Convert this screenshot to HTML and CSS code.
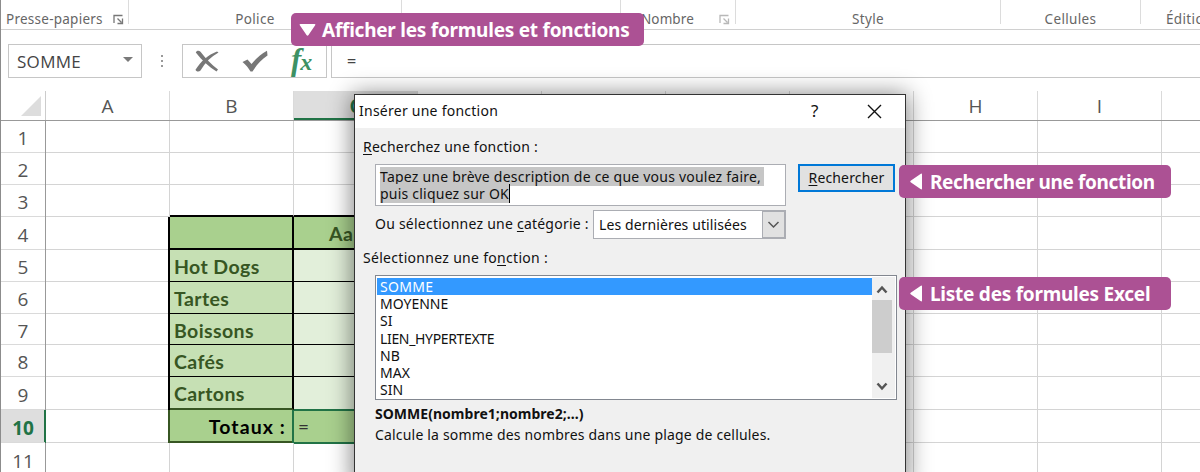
FILE: index.html
```html
<!DOCTYPE html>
<html lang="fr">
<head>
<meta charset="utf-8">
<title>Insérer une fonction</title>
<link rel="stylesheet" href="styles.css">
</head>
<body>
<div class="app">
  <div class="ribbon">
    <div class="group clipboard"><span>Presse-papiers</span>
      <svg class="launcher" width="11" height="11" viewBox="0 0 11 11"><path d="M1 9V1.500H9.500M4.500 4.500L8.500 8.500M9.500 4.500V9.500H4.500" /></svg>
    </div>
    <div class="group font"><span>Police</span></div>
    <div class="group align"></div>
    <div class="group number"><span>Nombre</span>
      <svg class="launcher pale" width="11" height="11" viewBox="0 0 11 11"><path d="M1 9V1.500H9.500M4.500 4.500L8.500 8.500M9.500 4.500V9.500H4.500" /></svg>
    </div>
    <div class="group style"><span>Style</span></div>
    <div class="group cells"><span>Cellules</span></div>
    <div class="group edit"><span>Édition</span></div>
  </div>

  <div class="formula-bar">
    <div class="name-box"><span>SOMME</span><i class="caret"></i></div>
    <div class="grip"><i></i><i></i><i></i></div>
    <div class="fx-box">
      <svg width="24" height="22" viewBox="0 0 24 22"><path d="M.8 2.500C1.500 .5 4 .2 5.500 1.800C11 8.500 16 14.500 23 19.500L21.500 21.500C14 17 7 10.500 .8 2.500ZM22 1.500L23.500 2.500C16 6.500 10 12.500 5.500 20.500C4 22.300 1 21.700 .5 19.800C6 11 13 5 22 1.500Z"/></svg>
      <svg width="26" height="22" viewBox="0 0 26 22"><path d="M.5 12L5.500 9.500L9.500 14C14 8.500 18.500 4.500 25 .8L25.500 5.500C19 10 14.500 15 10.500 21.500H8.500C6.500 18 4 15 .5 12Z"/></svg>
      <span class="fx"><b>f</b><b class="x">x</b></span>
    </div>
    <div class="formula-input">=</div>
  </div>

  <div class="col-heads">
    <div class="corner"><svg width="20" height="20" viewBox="0 0 20 20"><path d="M20 0V20H0Z"/></svg></div>
    <div>A</div><div>B</div><div class="active">C</div><div>D</div><div>E</div><div>F</div><div>G</div><div>H</div><div>I</div><div></div>
  </div>

  <div class="sheet">
    <div class="row-heads"><div>1</div><div>2</div><div>3</div><div>4</div><div>5</div><div>6</div><div>7</div><div>8</div><div>9</div><div class="active">10</div><div>11</div></div>
    <div class="column"><div></div><div></div><div></div><div></div><div></div><div></div><div></div><div></div><div></div><div></div><div></div></div>
    <div class="column"><div></div><div></div><div class="above"></div><div class="head"></div><div class="item">Hot Dogs</div><div class="item">Tartes</div><div class="item">Boissons</div><div class="item">Cafés</div><div class="item last">Cartons</div><div class="total">Totaux :</div><div></div></div>
    <div class="column"><div></div><div></div><div class="above"></div><div class="head">Aaron</div><div class="value"></div><div class="value"></div><div class="value"></div><div class="value"></div><div class="value"></div><div class="editing">=</div><div></div></div>
    <div class="column"><div></div><div></div><div></div><div></div><div></div><div></div><div></div><div></div><div></div><div></div><div></div></div>
    <div class="column"><div></div><div></div><div></div><div></div><div></div><div></div><div></div><div></div><div></div><div></div><div></div></div>
    <div class="column"><div></div><div></div><div></div><div></div><div></div><div></div><div></div><div></div><div></div><div></div><div></div></div>
    <div class="column"><div></div><div></div><div></div><div></div><div></div><div></div><div></div><div></div><div></div><div></div><div></div></div>
    <div class="column"><div></div><div></div><div></div><div></div><div></div><div></div><div></div><div></div><div></div><div></div><div></div></div>
    <div class="column"><div></div><div></div><div></div><div></div><div></div><div></div><div></div><div></div><div></div><div></div><div></div></div>
    <div class="column"><div></div><div></div><div></div><div></div><div></div><div></div><div></div><div></div><div></div><div></div><div></div></div>
  </div>

  <div class="dialog">
    <div class="title-bar"><span class="title">Insérer une fonction</span><span class="help">?</span>
      <svg width="15" height="15" viewBox="0 0 15 15"><path d="M1 1L14 14M14 1L1 14"/></svg>
    </div>
    <div class="dialog-body">
      <div class="label search-label"><u>R</u>echerchez une fonction :</div>
      <div class="search-row">
        <div class="search-text"><span class="sel line1">Tapez une brève description de ce que vous voulez faire, </span><br><span class="sel line2">puis cliquez sur OK</span></div>
        <div class="search-button"><span><u>R</u>echercher</span></div>
      </div>
      <div class="category-row">
        <span class="category-label">Ou sélectionnez une <u>c</u>atégorie :</span>
        <div class="combo"><span>Les dernières utilisées</span><i><svg width="13" height="8" viewBox="0 0 13 8"><path d="M1.500 1L6.500 6L11.500 1"/></svg></i></div>
      </div>
      <div class="label function-label">Sélectionnez une fo<u>n</u>ction :</div>
      <div class="list">
        <div class="items"><div class="selected">SOMME</div><div>MOYENNE</div><div>SI</div><div class="long">LIEN_HYPERTEXTE</div><div>NB</div><div>MAX</div><div>SIN</div></div>
        <div class="scrollbar">
          <svg width="12" height="9" viewBox="0 0 12 9"><path d="M1.500 7.500L6 2.500L10.500 7.500"/></svg>
          <div class="thumb"></div>
          <svg width="12" height="9" viewBox="0 0 12 9"><path d="M1.500 1.500L6 6.500L10.500 1.500"/></svg>
        </div>
      </div>
      <div class="signature">SOMME(nombre1;nombre2;...)</div>
      <div class="description">Calcule la somme des nombres dans une plage de cellules.</div>
    </div>
  </div>

  <div class="callout show"><svg width="17" height="12" viewBox="0 0 17 12"><path d="M1.500 0H15.500Q17 0 16 1.500L9.500 11Q8.500 12.500 7.500 11L1 1.500Q0 0 1.500 0Z"/></svg><span>Afficher les formules et fonctions</span></div>
  <div class="callout search"><svg width="12" height="17" viewBox="0 0 12 17"><path d="M12 1.500V15.500Q12 17 10.500 16L1 9.500Q-.5 8.500 1 7.500L10.500 1Q12 0 12 1.500Z"/></svg><span>Rechercher une fonction</span></div>
  <div class="callout formulas"><svg width="12" height="17" viewBox="0 0 12 17"><path d="M12 1.500V15.500Q12 17 10.500 16L1 9.500Q-.5 8.500 1 7.500L10.500 1Q12 0 12 1.500Z"/></svg><span>Liste des formules Excel</span></div>
</div>
</body>
</html>
```
FILE: styles.css
```css
* { box-sizing: border-box; }
body { margin: 0; font-family: "Open Sans", "Noto Sans", sans-serif; }
.app { position: relative; width: 1200px; height: 472px; overflow: hidden; background: #fff; border-left: 1px solid #8c8c8c; display: flex; flex-direction: column; white-space: nowrap; }

.ribbon { height: 30px; flex: none; display: flex; align-items: flex-start; border-bottom: 1px solid #d0d0d0; color: #666; font: 13.5px/20px "Noto Sans", sans-serif; letter-spacing: .35px; }
.group { height: 24px; padding-top: 9px; border-right: 1px solid #dcdcdc; display: flex; justify-content: center; flex: none; }
.ribbon .launcher { fill: none; stroke: #777; stroke-width: 1.3; margin-top: 5px; flex: none; }
.ribbon .pale { stroke: #b8b8b8; }
.clipboard { width: 128px; justify-content: flex-start; padding-left: 5px; gap: 10px; letter-spacing: .25px; }
.font { width: 273px; padding-right: 20px; }
.align { width: 219px; }
.number { width: 115px; justify-content: flex-start; padding-left: 20px; gap: 25px; letter-spacing: .1px; }
.style { width: 265px; }
.cells { width: 140px; }
.edit { width: 80px; justify-content: flex-start; padding-left: 25px; border: 0; }

.formula-bar { height: 61px; flex: none; padding: 14px 0 13px 7px; display: flex; color: #444; }
.formula-bar > div { height: 34px; }
.name-box { width: 134px; border: 1px solid #c6c6c6; display: flex; align-items: center; justify-content: space-between; padding: 0 8px; font-size: 17px; letter-spacing: .3px; }
.caret { border: 5px solid transparent; border-top: 5px solid #7a7a7a; border-bottom: 0; margin-bottom: 4px; }
.grip { width: 40px; display: flex; flex-direction: column; gap: 3px; align-items: center; justify-content: center; }
.grip i { width: 2px; height: 2px; background: #999; }
.fx-box { width: 145px; border: 1px solid #c6c6c6; display: flex; align-items: center; padding-left: 12px; }
.fx-box svg { fill: #777; margin-right: 23px; flex: none; }
.fx { color: #3d9164; font: italic 31px/28px "Liberation Serif", serif; display: flex; margin-left: 0; }
.fx .x { font-size: 24px; padding-top: 2px; margin-left: -1px; }
.formula-input { flex: 1; margin-left: 4px; border: 1px solid #c6c6c6; border-right: 0; padding: 4px 0 0 15px; font-size: 16px; font-weight: 600; line-height: 24px; }

.col-heads { height: 30px; flex: none; display: flex; border-bottom: 1px solid #999; color: #555; font: 19px/30px "Open Sans", sans-serif; }
.col-heads > div { width: 124px; flex: none; text-align: center; border-right: 1px solid #dadada; }
.col-heads .corner { width: 45px; padding: 5px 4px 0 0; text-align: right; line-height: 0; border-color: #ccc; }
.corner svg { fill: #ddd; }
.col-heads .active { background: #dedede; color: #217346; font-weight: 700; border-bottom: 2px solid #217346; }

.sheet { flex: none; display: flex; }
.row-heads, .column { display: grid; grid-template-rows: 32px 32px 32px 33px 32px 32px 31px 32px 33px 33px 33px; width: 124px; flex: none; }
.row-heads { width: 45px; border-right: 1px solid #999; color: #555; font-size: 19px; }
.row-heads > div { border-bottom: 1px solid #dadada; display: flex; align-items: center; justify-content: center; padding-top: 3px; }
.row-heads .active { background: #dedede; color: #217346; font-weight: 700; box-shadow: 1px 0 #217346, inset -1px 0 #217346; letter-spacing: 0; }
.column > div { border-right: 1px solid #d4d4d4; border-bottom: 1px solid #d4d4d4; }
.column .above { border-bottom: 2px solid #000; }
.column .head, .column .item, .column .total, .column .value { font: 700 19.500px/34px Lato, sans-serif; letter-spacing: .4px; color: #375623; border-right: 2px solid #000; border-bottom: 1px solid #000; padding-left: 4px; }
.column .head, .column .item, .column .last { box-shadow: -2px 0 #000; }
.column .head { background: #a9d08e; border-bottom: 2px solid #000; padding-left: 35px; }
.column .item { background: #c6e0b4; }
.column .value { background: #e2efda; }
.column .last { border-bottom: 2px solid #375623; }
.column .total { background: #a9d08e; color: #000; text-align: right; padding-right: 6px; border: 2px solid #375623; border-top: 0; border-left: 0; box-shadow: -2px 0 #375623; letter-spacing: 1.100px; }
.column .editing { background: #a9d08e; box-shadow: 0 0 0 1px #217346; border: 1px solid #217346; border-left: 0; box-shadow: -2px 0 #217346, 0 -1px #217346, 0 1px #217346; font: 19px/31px Lato, sans-serif; padding-left: 4px; color: #333; }

.dialog { position: absolute; left: 353px; top: 94px; width: 552px; height: 390px; background: #f0f0f0; border: 1px solid #333; box-shadow: 0 2px 22px 2px rgba(0,0,0,.48); color: #111; font: 14px/18px "Noto Sans", sans-serif; }
.dialog u { text-underline-offset: 2px; }
.title-bar { height: 33px; background: #fff; display: flex; align-items: center; padding-left: 4px; }
.title { width: 452px; letter-spacing: .25px; line-height: 16px; padding-bottom: 2px; }
.help { width: 56px; font-size: 17px; padding-bottom: 2px; }
.title-bar svg { stroke: #111; stroke-width: 1.400; }
.dialog-body { padding: 10px 8px; }
.label { height: 18px; letter-spacing: .22px; }
.search-row { display: flex; margin: 8px 0 0 12px; gap: 12px; align-items: flex-start; }
.search-text { width: 411px; height: 42px; border: 1px solid #abadb3; background: #fff; padding: 3px 4px; line-height: 17px; letter-spacing: .22px; }
.sel { background: #c6c6c6; }
.line1 { padding-right: 3px; }
.line2 { border-right: 1px solid #000; }
.search-button { width: 97px; height: 28px; border: 2px solid #0078d7; background: #e1e1e1; text-align: center; line-height: 24px; letter-spacing: .15px; }
.category-row { display: flex; margin: 4px 0 0 12px; }
.category-label { width: 218px; line-height: 28px; letter-spacing: .23px; }
.combo { width: 193px; height: 29px; border: 1px solid #abadb3; background: #fff; display: flex; justify-content: space-between; line-height: 27px; padding-left: 5px; letter-spacing: .1px; }
.combo i { width: 23px; border: 1px solid #abadb3; background: #e1e1e1; display: flex; align-items: center; justify-content: center; }
.combo svg { fill: none; stroke: #555; stroke-width: 1.500; }
.function-label { margin-top: 10px; letter-spacing: .3px; }
.list { margin: 8px 0 0 12px; width: 522px; height: 125px; border: 1px solid #828790; background: #fff; padding: 1px; display: flex; justify-content: space-between; }
.items { width: 495px; padding-top: 1px; line-height: 17.2px; }
.items div { height: 17.200px; padding-left: 3px; }
.items .selected { background: #3399ff; color: #fff; letter-spacing: .3px; }
.items .long { letter-spacing: -.34px; }
.scrollbar { width: 23px; background: #f0f0f0; display: flex; flex-direction: column; align-items: center; padding: 8px 3px 7px 0; }
.scrollbar svg { fill: none; stroke: #555; stroke-width: 2.500; }
.thumb { width: 20px; height: 53px; background: #cdcdcd; margin: 6px 0 auto; flex: none; }
.signature { margin: 5px 0 0 12px; font-weight: 700; letter-spacing: .03px; }
.description { margin: 3px 0 0 12px; letter-spacing: .18px; }

.callout { position: absolute; height: 33px; border-radius: 5px; background: #ac5194; color: #fff; display: flex; align-items: center; font: 700 19px/32px "Noto Sans", sans-serif; }
.callout svg { fill: #fff; flex: none; }
.show { left: 290px; top: 13px; width: 353px; padding-left: 8px; letter-spacing: -.24px; }
.show span { margin-left: 6px; }
.search, .formulas { left: 898px; width: 272px; padding-left: 11px; }
.search { top: 165px; letter-spacing: -.35px; }
.formulas { top: 277px; letter-spacing: -.25px; }
.search span, .formulas span { margin-left: 8px; }
```
